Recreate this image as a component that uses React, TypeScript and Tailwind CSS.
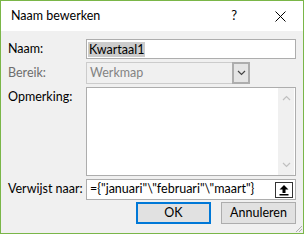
import React from "react";

function UploadIcon() {
  return (
    <svg width="12" height="12" viewBox="0 0 12 12" fill="black">
      <path d="M6 1 L10.5 5.5 L7.5 5.5 L7.5 9 L4.5 9 L4.5 5.5 L1.5 5.5 Z" />
      <rect x="1.5" y="10" width="9" height="1.5" />
    </svg>
  );
}

function Chevron({ up, color }: { up?: boolean; color: string }) {
  return (
    <svg width="9" height="6" viewBox="0 0 9 6" fill="none" stroke={color} strokeWidth="1.2">
      {up ? <path d="M1 5 L4.5 1.5 L8 5" /> : <path d="M1 1 L4.5 4.5 L8 1" />}
    </svg>
  );
}

export default function App() {
  return (
    <div className="relative w-[304px] h-[234px] border border-[#7ab648] bg-[#f0f0f0] flex flex-col font-['Lato','Noto_Sans',sans-serif] text-[12.5px] text-black overflow-hidden">
      {/* titelbalk */}
      <div className="h-[30px] bg-white flex items-center pl-[10px] shrink-0">
        <span>Naam bewerken</span>
        <span className="ml-auto mr-[38px] text-[13px]">?</span>
        <svg className="mr-[17px]" width="11" height="11" viewBox="0 0 11 11" stroke="black" strokeWidth="1">
          <path d="M0.5 0.5 L10.5 10.5 M10.5 0.5 L0.5 10.5" />
        </svg>
      </div>

      <div className="flex flex-col px-[7px] pt-[8px]">
        {/* Naam */}
        <div className="flex items-center h-[20px]">
          <div className="w-[78px]">Naam:</div>
          <div className="flex-1 h-full bg-white border border-[#adadad] flex items-center pl-[1px]">
            <span className="bg-[#cccccc] px-[1px] leading-[15px]">Kwartaal1</span>
          </div>
        </div>

        {/* Bereik */}
        <div className="flex items-center h-[22px] mt-[3px]">
          <div className="w-[78px] text-[#6d6d6d]">Bereik:</div>
          <div className="w-[164px] h-full border border-[#cccccc] flex items-center pl-[3px] text-[#838383]">
            Werkmap
            <div className="ml-auto w-[18px] h-[22px] -mr-[1px] border-2 border-[#adadad] bg-[#e5e5e5] flex items-center justify-center">
              <Chevron color="#444" />
            </div>
          </div>
        </div>

        {/* Opmerking */}
        <div className="flex mt-[3px] h-[89px]">
          <div className="w-[78px] pt-[1px]">Opmerking:</div>
          <div className="flex-1 h-full bg-white border border-[#adadad] flex justify-end">
            <div className="w-[16px] h-full bg-[#f0f0f0] mr-[1px] flex flex-col items-center justify-between py-[7px]">
              <Chevron up color="#c0c0c0" />
              <Chevron color="#c0c0c0" />
            </div>
          </div>
        </div>

        {/* Verwijst naar */}
        <div className="flex items-center h-[21px] mt-[3px]">
          <div className="w-[78px]">Verwijst naar:</div>
          <div className="flex-1 h-full bg-white border border-[#adadad] flex items-center pl-[3px]">
            <span className="whitespace-nowrap">={"{"}"januari"\"februari"\"maart"{"}"}</span>
            <div className="ml-auto mr-[2px] w-[18px] h-[16px] border border-[#333] flex items-center justify-center">
              <UploadIcon />
            </div>
          </div>
        </div>

        {/* knoppen */}
        <div className="flex justify-end gap-[10px] mt-[2px]">
          <button className="w-[75px] h-[22px] border-2 border-[#0078d7] bg-[#e1e1e1]">OK</button>
          <button className="w-[75px] h-[22px] border border-[#adadad] bg-[#e1e1e1]">Annuleren</button>
        </div>
      </div>

      {/* resize grip */}
      <svg className="absolute right-0 bottom-0" width="10" height="10" viewBox="0 0 10 10" stroke="#b0b0b0" strokeWidth="1">
        <path d="M9 3 L3 9 M9 6 L6 9" />
      </svg>
    </div>
  );
}
